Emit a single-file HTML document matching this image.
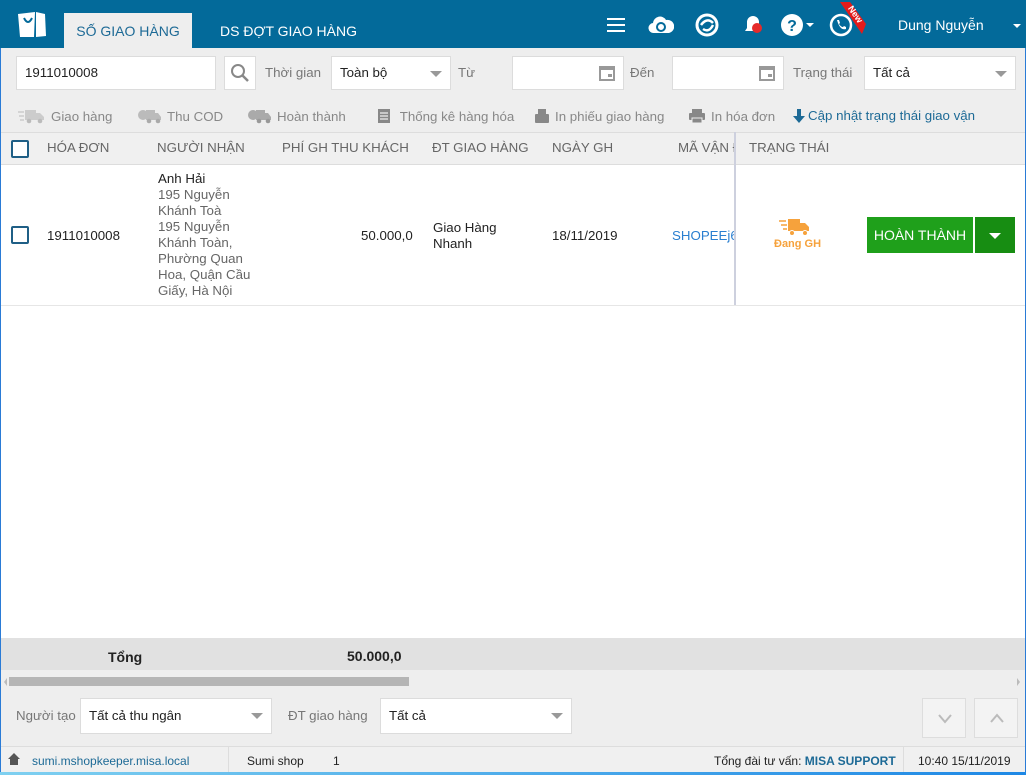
<!DOCTYPE html><html><head><meta charset="utf-8"><style>
*{box-sizing:border-box;margin:0;padding:0}
body{width:1026px;height:775px;overflow:hidden;font-family:"Liberation Sans",sans-serif;font-size:13.3px;color:#222;background:#fff;position:relative}
.a{position:absolute}
.top{left:0;top:0;width:1026px;height:48px;background:#036a9a}
.tab{top:13px;height:35px;line-height:36px;font-size:14px;color:#fff}
.inp{background:#fff;border:1px solid #dcdcdc;height:34px;line-height:32px;padding-left:8px;font-size:13.3px}
.lbl{color:#777;font-size:13.3px;line-height:34px}
.caret{position:absolute;right:8px;top:14px;border-left:6px solid transparent;border-right:6px solid transparent;border-top:6px solid #999}
.tb{top:108px;color:#888;font-size:13.3px;display:flex;align-items:center;gap:5px}
.th{top:140px;color:#666;font-size:13.3px}
.cb{width:18px;height:18px;border:2px solid #1f5f86;background:#fff;border-radius:2px}
.sb{font-size:12px;top:754px}
</style></head><body>
<div class="a" style="left:0;top:0;width:1026px;height:775px;border:1px solid #2a7bd6;border-top:0"></div>
<div class="a top"></div>
<svg class="a" style="left:17px;top:10px" width="30" height="28" viewBox="0 0 30 28"><path d="M1 4 L18 2 L17 27 L3 27 Z" fill="#fff"/><path d="M19 2 L28 4 L29 26 L19 27 Z" fill="#fff"/><path d="M7 8 Q11 16 15 8" stroke="#036a9a" stroke-width="2" fill="none"/></svg>
<div class="a tab" style="left:64px;width:128px;background:#eeeeee;color:#1d6a96;text-align:center">SỐ GIAO HÀNG</div>
<div class="a tab" style="left:220px">DS ĐỢT GIAO HÀNG</div>
<div class="a" style="left:607px;top:18px;width:18px;height:2px;background:#fff;box-shadow:0 6px 0 #fff,0 12px 0 #fff"></div>
<svg class="a" style="left:648px;top:14px" width="26" height="22" viewBox="0 0 26 22"><path d="M6 19 A5 5 0 0 1 5 9 A7 7 0 0 1 18 6 A6 6 0 0 1 21 19 Z" fill="#fff"/><circle cx="13" cy="13" r="4" stroke="#036a9a" stroke-width="2" fill="none"/></svg>
<svg class="a" style="left:695px;top:13px" width="24" height="24" viewBox="0 0 24 24"><circle cx="12" cy="12" r="10" stroke="#fff" stroke-width="3" fill="none"/><path d="M6 12 Q12 4 18 10 M8 16 Q14 20 18 12" stroke="#fff" stroke-width="2.5" fill="none"/></svg>
<svg class="a" style="left:741px;top:13px" width="24" height="24" viewBox="0 0 24 24"><path d="M4 18 L6 15 L6 9 A6 6 0 0 1 18 9 L18 15 L20 18 Z" fill="#fff"/><circle cx="16" cy="15" r="5" fill="#e52b2b"/></svg>
<svg class="a" style="left:780px;top:13px" width="24" height="24" viewBox="0 0 24 24"><circle cx="12" cy="12" r="11" fill="#fff"/><text x="12" y="18" font-size="16" font-weight="bold" text-anchor="middle" fill="#036a9a" font-family="Liberation Sans">?</text></svg>
<div class="a" style="left:806px;top:23px;border-left:4px solid transparent;border-right:4px solid transparent;border-top:4px solid #fff"></div>
<svg class="a" style="left:829px;top:13px" width="24" height="24" viewBox="0 0 24 24"><circle cx="12" cy="12" r="10" stroke="#fff" stroke-width="2.5" fill="none"/><path d="M8 7 L10 7 L11 10 L10 11 Q12 14 14 14 L15 13 L17 14 L17 16 Q11 18 8 7Z" fill="#fff"/></svg>
<svg class="a" style="left:836px;top:2px" width="30" height="32" viewBox="0 0 30 32"><path d="M4 0 L14 0 L30 22 L26 32 Z" fill="#e31b1b"/><text x="17" y="14" font-size="9" font-weight="bold" fill="#fff" transform="rotate(55 17 14)" text-anchor="middle" font-family="Liberation Sans">New</text></svg>
<div class="a" style="left:898px;top:17px;color:#fff;font-size:14px">Dung Nguyễn</div>
<div class="a" style="left:1013px;top:24px;border-left:4px solid transparent;border-right:4px solid transparent;border-top:4px solid #fff"></div>
<div class="a" style="left:1px;top:48px;width:1024px;height:84px;background:#eeeeee"></div>
<div class="a inp" style="left:16px;top:56px;width:200px">1911010008</div>
<div class="a inp" style="left:224px;top:56px;width:32px;padding:0"><svg width="30" height="32" viewBox="0 0 30 32"><circle cx="13" cy="14" r="6" stroke="#888" stroke-width="2" fill="none"/><path d="M17 18 L23 24" stroke="#888" stroke-width="2.5"/></svg></div>
<div class="a lbl" style="left:265px;top:56px">Thời gian</div>
<div class="a inp" style="left:331px;top:56px;width:120px">Toàn bộ<span class="caret"></span></div>
<div class="a lbl" style="left:458px;top:56px">Từ</div>
<div class="a inp" style="left:512px;top:56px;width:112px"><svg class="a" style="right:8px;top:8px" width="16" height="16"><rect x="1" y="2" width="14" height="13" fill="none" stroke="#999" stroke-width="2"/><rect x="1" y="2" width="14" height="3" fill="#999"/><rect x="9" y="9" width="4" height="3" fill="#999"/></svg></div>
<div class="a lbl" style="left:630px;top:56px">Đến</div>
<div class="a inp" style="left:672px;top:56px;width:112px"><svg class="a" style="right:8px;top:8px" width="16" height="16"><rect x="1" y="2" width="14" height="13" fill="none" stroke="#999" stroke-width="2"/><rect x="1" y="2" width="14" height="3" fill="#999"/><rect x="9" y="9" width="4" height="3" fill="#999"/></svg></div>
<div class="a lbl" style="left:793px;top:56px">Trạng thái</div>
<div class="a inp" style="left:864px;top:56px;width:152px">Tất cả<span class="caret"></span></div>
<div class="a tb" style="left:18px"><svg width="28" height="16" viewBox="0 0 28 16"><path d="M0 4h6M1 8h5M2 12h4" stroke="#ccc" stroke-width="1.5"/><rect x="7" y="2" width="11" height="10" fill="#ccc"/><path d="M18 5h4l4 4v3h-8z" fill="#ccc"/><circle cx="11" cy="13" r="2.3" fill="#bbb"/><circle cx="22" cy="13" r="2.3" fill="#bbb"/></svg>Giao hàng</div>
<div class="a tb" style="left:138px"><svg width="24" height="16" viewBox="0 0 24 16"><circle cx="5" cy="7" r="5" fill="#bbb"/><rect x="8" y="2" width="9" height="10" fill="#bbb"/><path d="M17 5h3l3 4v3h-6z" fill="#bbb"/><circle cx="11" cy="13" r="2.3" fill="#aaa"/><circle cx="20" cy="13" r="2.3" fill="#aaa"/></svg>Thu COD</div>
<div class="a tb" style="left:248px"><svg width="24" height="16" viewBox="0 0 24 16"><circle cx="5" cy="7" r="5" fill="#aaa"/><rect x="8" y="2" width="9" height="10" fill="#aaa"/><path d="M17 5h3l3 4v3h-6z" fill="#aaa"/><circle cx="11" cy="13" r="2.3" fill="#999"/><circle cx="20" cy="13" r="2.3" fill="#999"/></svg>Hoàn thành</div>
<div class="a tb" style="left:377px"><svg width="14" height="16" viewBox="0 0 14 16"><rect x="1" y="1" width="12" height="14" fill="#888"/><path d="M3 5h8M3 8h8M3 11h8" stroke="#eee" stroke-width="1.2"/></svg>&nbsp;Thống kê hàng hóa</div>
<div class="a tb" style="left:534px"><svg width="16" height="16" viewBox="0 0 16 16"><rect x="4" y="1" width="8" height="6" fill="#888"/><rect x="1" y="6" width="14" height="9" rx="1" fill="#888"/></svg>In phiếu giao hàng</div>
<div class="a tb" style="left:688px"><svg width="18" height="16" viewBox="0 0 18 16"><rect x="4" y="1" width="10" height="4" fill="#888"/><rect x="1" y="5" width="16" height="7" rx="1" fill="#888"/><rect x="4" y="10" width="10" height="5" fill="#888" stroke="#eee"/></svg>In hóa đơn</div>
<div class="a tb" style="left:793px;color:#1d6a96;gap:3px"><svg width="12" height="14" viewBox="0 0 12 14"><path d="M4 0h4v7h4l-6 7-6-7h4z" fill="#1d6a96"/></svg>Cập nhật trạng thái giao vận</div>
<div class="a" style="left:1px;top:132px;width:1024px;height:33px;background:#f0f0f0;border-top:1px solid #ddd;border-bottom:1px solid #ddd"></div>
<div class="a cb" style="left:11px;top:140px"></div>
<div class="a th" style="left:47px">HÓA ĐƠN</div>
<div class="a th" style="left:157px">NGƯỜI NHẬN</div>
<div class="a th" style="left:282px">PHÍ GH THU KHÁCH</div>
<div class="a th" style="left:432px">ĐT GIAO HÀNG</div>
<div class="a th" style="left:552px">NGÀY GH</div>
<div class="a th" style="left:678px;width:56px;overflow:hidden;white-space:nowrap">MÃ VẬN ĐƠN</div>
<div class="a th" style="left:749px">TRẠNG THÁI</div>
<div class="a" style="left:734px;top:132px;width:2px;height:173px;background:#cdd0de"></div>
<div class="a" style="left:1px;top:305px;width:1024px;height:1px;background:#e6e6e6"></div>
<div class="a cb" style="left:11px;top:226px"></div>
<div class="a" style="left:47px;top:228px">1911010008</div>
<div class="a" style="left:158px;top:171px;width:100px;line-height:16px;color:#666"><span style="color:#222">Anh Hải</span><br>195 Nguyễn Khánh Toà<br>195 Nguyễn Khánh Toàn, Phường Quan Hoa, Quận Cầu Giấy, Hà Nội</div>
<div class="a" style="left:361px;top:228px">50.000,0</div>
<div class="a" style="left:433px;top:220px;line-height:16px">Giao Hàng<br>Nhanh</div>
<div class="a" style="left:552px;top:228px">18/11/2019</div>
<div class="a" style="left:672px;top:228px;width:62px;overflow:hidden;white-space:nowrap;color:#2a7fd0">SHOPEEj6</div>
<svg class="a" style="left:778px;top:217px" width="32" height="20" viewBox="0 0 32 20"><path d="M1 4h7M3 8h6M5 12h4" stroke="#f6a23c" stroke-width="1.5"/><rect x="10" y="2" width="12" height="12" fill="#f6a23c"/><path d="M22 6h5l4 4v4h-9z" fill="#f6a23c"/><circle cx="14" cy="16" r="2.5" fill="#f6a23c" stroke="#fff"/><circle cx="27" cy="16" r="2.5" fill="#f6a23c" stroke="#fff"/></svg>
<div class="a" style="left:774px;top:238px;color:#f6a23c;font-size:11px;font-weight:bold">Đang GH</div>
<div class="a" style="left:867px;top:217px;width:106px;height:36px;background:#1fa01b;color:#fff;line-height:36px;text-align:center;font-size:14px">HOÀN THÀNH</div>
<div class="a" style="left:975px;top:217px;width:40px;height:36px;background:#178d12"><div class="a" style="left:14px;top:16px;border-left:6px solid transparent;border-right:6px solid transparent;border-top:6px solid #fff"></div></div>
<div class="a" style="left:1px;top:638px;width:1024px;height:32px;background:#e1e1e1"></div>
<div class="a" style="left:108px;top:649px;font-weight:bold;font-size:14px">Tổng</div>
<div class="a" style="left:347px;top:648px;font-weight:bold;font-size:14px">50.000,0</div>
<div class="a" style="left:1px;top:670px;width:1024px;height:20px;background:#eeeeee"></div>
<div class="a" style="left:4px;top:678px;border-top:4px solid transparent;border-bottom:4px solid transparent;border-right:3px solid #bbb"></div>
<div class="a" style="left:1017px;top:678px;border-top:4px solid transparent;border-bottom:4px solid transparent;border-left:3px solid #bbb"></div>
<div class="a" style="left:9px;top:677px;width:400px;height:9px;background:#b5b5b5"></div>
<div class="a" style="left:1px;top:690px;width:1024px;height:56px;background:#eeeeee"></div>
<div class="a lbl" style="left:16px;top:699px">Người tạo</div>
<div class="a inp" style="left:80px;top:698px;width:192px;height:36px;line-height:34px">Tất cả thu ngân<span class="caret"></span></div>
<div class="a lbl" style="left:288px;top:699px">ĐT giao hàng</div>
<div class="a inp" style="left:380px;top:698px;width:192px;height:36px;line-height:34px">Tất cả<span class="caret"></span></div>
<div class="a" style="left:922px;top:698px;width:44px;height:40px;border:1px solid #ddd;background:#f3f3f3"><svg class="a" style="left:14px;top:14px" width="16" height="12"><path d="M2 2 L8 9 L14 2" stroke="#bbb" stroke-width="2" fill="none"/></svg></div>
<div class="a" style="left:974px;top:698px;width:44px;height:40px;border:1px solid #ddd;background:#f3f3f3"><svg class="a" style="left:14px;top:13px" width="16" height="12"><path d="M2 10 L8 3 L14 10" stroke="#bbb" stroke-width="2" fill="none"/></svg></div>
<div class="a" style="left:1px;top:746px;width:1024px;height:26px;background:#f0f0f0;border-top:1px solid #ddd"></div>
<svg class="a" style="left:8px;top:753px" width="12" height="12" viewBox="0 0 12 12"><path d="M6 0 L12 6 L10 6 L10 12 L2 12 L2 6 L0 6Z" fill="#555"/></svg>
<div class="a sb" style="left:32px;color:#1d6a96">sumi.mshopkeeper.misa.local</div>
<div class="a" style="left:228px;top:747px;width:1px;height:25px;background:#ddd"></div>
<div class="a sb" style="left:247px">Sumi shop</div>
<div class="a sb" style="left:333px">1</div>
<div class="a sb" style="left:714px">Tổng đài tư vấn: <b style="color:#1d6a96">MISA SUPPORT</b></div>
<div class="a" style="left:903px;top:747px;width:1px;height:25px;background:#ddd"></div>
<div class="a sb" style="left:918px">10:40 15/11/2019</div>
<div class="a" style="left:0;top:772px;width:1026px;height:3px;background:linear-gradient(90deg,#7fd0f0,#1e88e5)"></div>
</body></html>
